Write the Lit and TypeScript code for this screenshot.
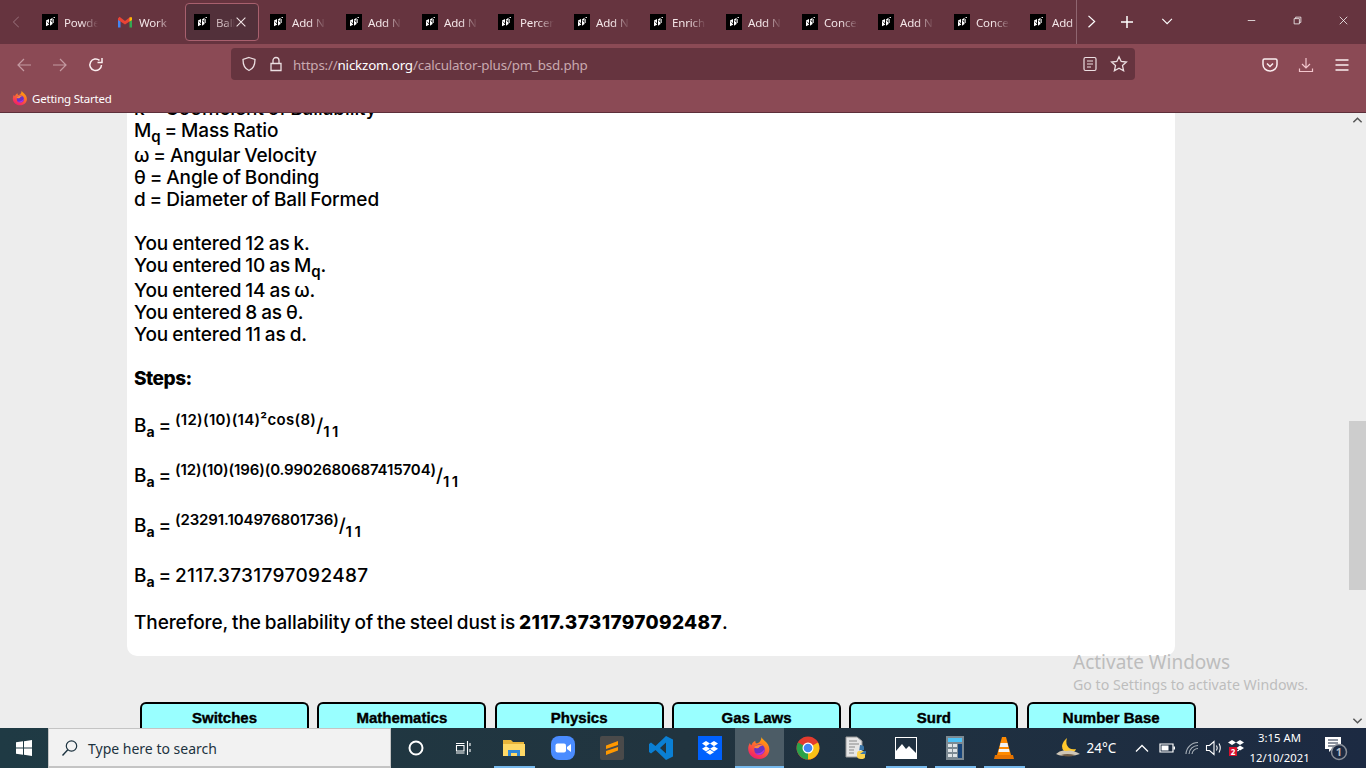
import { LitElement, html, css, svg } from "lit";
import { customElement } from "lit/decorators.js";

const favicon = html`<svg class="fav" viewBox="0 0 16 16"><rect width="16" height="16" fill="#000"/><path d="M4 6.500 7 5V10.800L4 12.200ZM8 5.500 10.500 3.800V10L8 11.800Z" fill="#fff"/><path d="M5 7.500 7 10M8.800 6 10 8" stroke="#000" stroke-width="0.800"/><rect x="11.500" y="3" width="1.500" height="1" fill="#ddd"/><rect x="11" y="5" width="1" height="4" fill="#aaa"/></svg>`;
const gmail = html`<svg class="fav" viewBox="0 0 16 16"><path d="M1 4.500V13.500H3.500V7.500Z" fill="#4285f4"/><path d="M15 4.500V13.500H12.500V7.500Z" fill="#34a853"/><path d="M1 4.500 2.500 2.800 8 7 13.500 2.800 15 4.500 15 6 12.500 7.500 8 10.500 3.500 7.500 1 6Z" fill="#ea4335"/><path d="M12.500 3.500 15 3.200V6L12.500 7.500Z" fill="#fbbc04"/></svg>`;
const fox = (s: number) => html`<svg width=${s} height=${s} viewBox="0 0 24 24">
  <defs><linearGradient id="fxb" x1="0.800" y1="0" x2="0.300" y2="1"><stop offset="0" stop-color="#ffb000"/><stop offset="0.450" stop-color="#ff6b2e"/><stop offset="1" stop-color="#f0186f"/></linearGradient></defs>
  <path d="M14.500 1C15.500 3.800 19 5 21 8.500 23.500 13 22.500 18 18.500 21 14 24.300 7.500 23.500 3.800 19.500 .5 16 .5 11 2.800 7 3.200 8.300 3.800 9 4.500 9.300 5 7.300 6.500 5.500 8.500 4.800 8 6.300 8.500 7 9.500 7.500 11.500 7 14 6 14.500 1Z" fill="url(#fxb)"/>
  <circle cx="12.500" cy="13.500" r="5.300" fill="#6a32c4"/>
  <path d="M7 11.500C9 9 13 8 16 9.500 14 9.500 12.500 10.500 11.500 12 9.800 12.500 8.200 12.300 7 11.500Z" fill="#ff8a3d"/>
  <path d="M17.500 13C17.800 16 15.500 18.500 12.500 18.800 10.500 19 9 18.300 8 17.300 11 18 15 17 17.500 13Z" fill="#b833e1"/>
</svg>`;

const tabs = ["Powder", "Work", "Ball", "Add N", "Add N", "Add N", "Percent", "Add N", "Enrich", "Add N", "Concen", "Add N", "Concen", "Add N"];

const line = (d: string, w = 1.3) => svg`<path d=${d} fill="none" stroke="currentColor" stroke-width=${w}/>`;
const ico = (s: number, d: string, w = 1.3, vb = 16) => html`<svg class="ic" width=${s} height=${s} viewBox="0 0 ${vb} ${vb}">${line(d, w)}</svg>`;

@customElement("app-root")
export class AppRoot extends LitElement {
  static styles = css`
    :host { display: flex; flex-direction: column; width: 1366px; height: 768px; overflow: hidden; position: relative; font-family: "Noto Sans", sans-serif; }
    .ic { display: block; flex: none; }
    .tabbar { height: 44px; background: #66343f; display: flex; align-items: center; color: #fff; flex: none; }
    .arrow-l { width: 33px; display: flex; justify-content: center; color: #8f6670; }
    .strip { width: 1043px; height: 44px; display: flex; overflow: hidden; flex: none; align-items: center; }
    .tab { width: 74px; margin-right: 2px; height: 38px; box-sizing: border-box; flex: none; display: flex; align-items: center; padding-left: 8px; gap: 6px; font-size: 11.500px; letter-spacing: -0.150px; color: #f4e6e8; position: relative; border: 1px solid transparent; border-radius: 4px; }
    .tab.active { background: #52303a; border-color: #a8606e; }
    .tab:nth-child(2) .fav { margin-left: -1px; }
    .fav { width: 16px; height: 16px; flex: none; }
    .title { overflow: hidden; white-space: nowrap; width: 34px; -webkit-mask-image: linear-gradient(90deg, #000 50%, transparent 100%); mask-image: linear-gradient(90deg, #000 50%, transparent 100%); }
    .active .title { width: 19px; color: #cdb8bc; }
    .close { position: absolute; right: 10px; top: 11px; }
    .sep { width: 1px; height: 44px; background: #8f6670; flex: none; }
    .tabctl { width: 29px; display: flex; justify-content: center; flex: none; }
    .tabctl.plus { margin-left: -4px; width: 50px; }
    .tabctl.chev { width: 32px; }
    .winctl { margin-left: auto; margin-right: -2px; display: flex; }
    .winctl div { width: 46px; display: flex; justify-content: center; }
    .toolbar { height: 40px; background: #8b4a55; display: flex; align-items: center; color: #fbeef0; flex: none; }
    .nav { width: 36px; display: flex; justify-content: center; flex: none; }
    .nav.dim { color: #c49aa2; }
    .navs { display: flex; padding: 2px 0 0 6px; width: 231px; box-sizing: border-box; flex: none; }
    .url { width: 904px; height: 32px; border-radius: 4px; background: #66343f; display: flex; align-items: center; flex: none; padding-left: 10px; box-sizing: border-box; color: #ecdfe2; }
    .url .shield { margin-right: 11px; }
    .url .lock { margin-right: 9px; }
    .addr { font-size: 13.400px; letter-spacing: -0.200px; color: #c9a9af; white-space: nowrap; flex: 1; padding-top: 2px; }
    .addr b { font-weight: 400; color: #fff; }
    .url .reader { margin-right: 12px; }
    .url .star { margin-right: 7px; }
    .right { display: flex; margin-left: 117px; align-items: center; padding-top: 1px; }
    .right div { width: 36px; display: flex; justify-content: center; }
    .right .pink { color: #f3c6cd; }
    .bookmarks { height: 28px; background: #8b4a55; border-bottom: 1px solid #5d2f3a; display: flex; align-items: center; padding-left: 12px; gap: 4px; font-size: 11.500px; letter-spacing: -0.200px; color: #fff; flex: none; }
    .main { flex: 1; min-height: 0; background: #ededed; position: relative; display: flex; overflow: hidden; }
    .page { flex: 1; min-width: 0; overflow: hidden; }
    .scroll { width: 17px; flex: none; display: flex; flex-direction: column; color: #555; }
    .scroll .up { height: 15px; display: flex; justify-content: center; align-items: center; }
    .track { flex: 1; padding-top: 293px; }
    .thumb { height: 169px; background: #cdcdcd; }
    .card { margin: -15px 0 0 127px; width: 1048px; box-sizing: border-box; background: #fff; border-radius: 0 0 10px 10px; padding: 0 7px 24px; font-family: Inter, sans-serif; font-weight: 500; font-size: 19px; line-height: 22px; color: #000; word-spacing: -1px; letter-spacing: -0.100px; height: 558px; }
    .card sub, .card sup { font-size: 15px; font-weight: 600; line-height: 16px; }
    .card sub.a { font-size: 14px; font-weight: 700; }
    .card sub.den { letter-spacing: 2.500px; }
    .card sup.wide { letter-spacing: 0.300px; }
    .card strong { font-weight: 800; }
    .card strong.steps { letter-spacing: -0.500px; }
    .num { letter-spacing: 0.350px; }
    .btns { display: flex; gap: 8.350px; margin: 46px 0 0 140px; }
    .btn { width: 169px; height: 40px; flex: none; box-sizing: border-box; background: #99ffff; border: 2px solid #000; border-bottom: none; border-radius: 6px 6px 0 0; text-align: center; font-family: "Liberation Sans", sans-serif; font-weight: 700; font-size: 15px; padding-top: 5px; color: #000; -webkit-text-stroke: 0.400px #000; }
    .activate { position: absolute; left: 1073px; top: 536px; color: #bdbdbd; pointer-events: none; font-size: 19px; line-height: 26px; }
    .activate small { display: block; font-size: 14.200px; line-height: 20px; }
    .taskbar { height: 40px; flex: none; background: linear-gradient(90deg, #1f3a44 0%, #21343f 50%, #1c2a42 100%); display: flex; align-items: center; color: #fff; }
    .start { width: 48px; display: flex; justify-content: center; flex: none; }
    .search { width: 343px; height: 40px; box-sizing: border-box; background: #f2f2f2; border: 1px solid #c4c4c4; border-bottom-width: 2px; display: flex; align-items: center; padding-left: 12px; gap: 9px; color: #1d3340; font-size: 14px; flex: none; }
    .search span { padding-top: 1px; }
    .cell { width: 49px; height: 40px; display: flex; align-items: center; justify-content: center; flex: none; position: relative; box-sizing: border-box; }
    .cell.tv { width: 49.500px; padding-right: 4px; }
    .cell.on::after { content: ""; position: absolute; left: 4px; right: 4px; bottom: 0; height: 2px; background: #76b9ed; }
    .cell.cur { background: #4c5c66; }
    .cell.cur::after { left: 0; right: 0; }
    .tray { display: flex; align-items: center; height: 40px; margin-left: 27px; }
    .temp { font-size: 13.500px; margin: 0 15px 0 7px; width: 32px; }
    .clock { font-size: 11.300px; line-height: 20px; text-align: center; width: 60px; margin-left: 5px; }
    .notif { margin-left: 14px; display: flex; }
    .t { margin-right: 9px; }
    .t.bat { margin-right: 9px; }
    .t.wifi { margin-right: 5px; color: #aab2ba; }
    .t.vol { margin-right: 5px; }
  `;

  private winIcon() {
    return html`<svg width="16" height="16" viewBox="0 0 16 16"><path d="M0 2.300 7 1.300V7.500H0ZM8 1.200 16 0V7.500H8ZM0 8.500H7V14.700L0 13.700ZM8 8.500H16V16L8 14.800Z" fill="#fff"/></svg>`;
  }

  render() {
    return html`
      <div class="tabbar">
        <div class="arrow-l">${ico(14, "M10 2 4 8 10 14", 1.200)}</div>
        <div class="strip">
          ${tabs.map((t, i) => html`<div class="tab ${i === 2 ? "active" : ""}">
            ${i === 1 ? gmail : favicon}<span class="title">${t}</span>
            ${i === 2 ? html`<span class="close">${ico(14, "M3 3 13 13M13 3 3 13", 1.200)}</span>` : ""}
          </div>`)}
        </div>
        <div class="sep"></div>
        <div class="tabctl">${ico(14, "M4 1 11 7.500 4 14", 1.400)}</div>
        <div class="tabctl plus">${ico(16, "M8 2V14M2 8H14", 1.500)}</div>
        <div class="tabctl chev">${ico(14, "M1.500 4.500 7 10 12.500 4.500", 1.300)}</div>
        <div class="winctl">
          <div>${ico(12, "M1 6H11", 1)}</div>
          <div>${ico(12, "M1.500 3.500H8.500V10.500H1.500ZM3.500 3.500V1.500H10.500V8.500H8.500", 1)}</div>
          <div>${ico(12, "M1 1 11 11M11 1 1 11", 1)}</div>
        </div>
      </div>

      <div class="toolbar">
        <div class="navs">
          <div class="nav dim">${ico(16, "M15 8H2M8 2 2 8 8 14", 1.200)}</div>
          <div class="nav dim">${ico(16, "M1 8H14M8 2 14 8 8 14", 1.200)}</div>
          <div class="nav">${ico(16, "M13.500 8A5.800 5.800 0 1 1 11.500 3.400M9.500 5.500H14V1", 1.500)}</div>
        </div>
        <div class="url">
          <span class="shield">${ico(16, "M8 1.500 14 3.500C14 9 12 13 8 14.500 4 13 2 9 2 3.500Z", 1.300)}</span>
          <span class="lock">${ico(16, "M3 7.500H13V14.500H3ZM5 7.500V4.500A3 3 0 0 1 11 4.500V7.500", 1.300)}</span>
          <div class="addr">https://<b>nickzom.org</b>/calculator-plus/pm_bsd.php</div>
          <span class="reader">${ico(16, "M3.500 1.500H12.500Q14 1.500 14 3V13Q14 14.500 12.500 14.500H3.500Q2 14.500 2 13V3Q2 1.500 3.500 1.500ZM5 5H11M5 8H11M5 11H9", 1.200)}</span>
          <span class="star">${ico(18, "M9 1.800 11.200 6.500 16.400 7.100 12.500 10.600 13.600 15.800 9 13.200 4.400 15.800 5.500 10.600 1.600 7.100 6.800 6.500Z", 1.300, 18)}</span>
        </div>
        <div class="right">
          <div>${ico(16, "M2.500 2H13.500Q15 2 15 3.500V7.500A7 6.500 0 0 1 1 7.500V3.500Q1 2 2.500 2ZM5 6.500 8 9.500 11 6.500", 1.500)}</div>
          <div class="pink">${ico(16, "M8 1V10.500M4 7 8 11 12 7M1.500 11.500V14.500H14.500V11.500", 1.200)}</div>
          <div>${ico(16, "M1.500 3H14.500M1.500 8H14.500M1.500 13H14.500", 1.400)}</div>
        </div>
      </div>

      <div class="bookmarks">${fox(16)}<span>Getting Started</span></div>

      <div class="main">
        <div class="page">
          <div class="card">
            k = Coefficient of Ballability<br>
            M<sub>q</sub> = Mass Ratio<br>
            ω = Angular Velocity<br>
            θ = Angle of Bonding<br>
            d = Diameter of Ball Formed<br><br>
            You entered 12 as k.<br>
            You entered 10 as M<sub>q</sub>.<br>
            You entered 14 as ω.<br>
            You entered 8 as θ.<br>
            You entered 11 as d.<br><br>
            <strong class="steps">Steps:</strong><br><br>
            B<sub class="a">a</sub> = <sup class="wide">(12)(10)(14)²cos(8)</sup>/<sub class="den">11</sub><br><br>
            B<sub class="a">a</sub> = <sup>(12)(10)(196)(0.9902680687415704)</sup>/<sub class="den">11</sub><br><br>
            B<sub class="a">a</sub> = <sup>(23291.104976801736)</sup>/<sub class="den">11</sub><br><br>
            B<sub class="a">a</sub> = <span class="num">2117.3731797092487</span><sup></sup><br><br>
            Therefore, the ballability of the steel dust is <strong class="num">2117.3731797092487</strong>.
          </div>
          <div class="btns">
            ${["Switches", "Mathematics", "Physics", "Gas Laws", "Surd", "Number Base"].map((b) => html`<div class="btn">${b}</div>`)}
          </div>
        </div>
        <div class="scroll">
          <div class="up">${ico(11, "M1.500 8 6 3.500 10.500 8", 1.600, 12)}</div>
          <div class="track"><div class="thumb"></div></div>
          <div class="up">${ico(11, "M1.500 4 6 8.500 10.500 4", 1.600, 12)}</div>
        </div>
        <div class="activate">Activate Windows<small>Go to Settings to activate Windows.</small></div>
      </div>

      <div class="taskbar">
        <div class="start">${this.winIcon()}</div>
        <div class="search">
          <svg width="18" height="18" viewBox="0 0 18 18"><circle cx="10.500" cy="7" r="5.200" fill="none" stroke="#1d3340" stroke-width="1.200"/><path d="M6.800 10.800 1.500 16.500" stroke="#1d3340" stroke-width="1.400"/></svg>
          <span>Type here to search</span>
        </div>
        <div class="cell"><svg width="16" height="16" viewBox="0 0 16 16"><circle cx="8" cy="8" r="6.500" fill="none" stroke="#fff" stroke-width="2"/></svg></div>
        <div class="cell tv"><svg width="16" height="16" viewBox="0 0 16 16"><path d="M1 3.500H9.500M1 13H9.500M1.500 5.500H9V11H1.500ZM12.500 1V15M15 3V6M15 9V12" fill="none" stroke="#fff" stroke-width="1.100"/></svg></div>
        <div class="cell on">
          <svg width="22" height="20" viewBox="0 0 22 20"><path d="M0 2H8L10 4H21V18H0Z" fill="#e9b53a"/><path d="M0 6H22V18H0Z" fill="#ffd966"/><path d="M5 12H17V18H14V15H8V18H5Z" fill="#2f88d8"/></svg>
        </div>
        <div class="cell">
          <svg width="24" height="24" viewBox="0 0 24 24"><rect width="24" height="24" rx="8" fill="#4a8cff"/><rect x="4.500" y="7.500" width="10.500" height="9" rx="2" fill="#fff"/><path d="M16 11 20 8V16L16 13Z" fill="#fff"/></svg>
        </div>
        <div class="cell">
          <svg width="24" height="24" viewBox="0 0 24 24"><rect width="24" height="24" rx="2" fill="#4a4a4a"/><path d="M18 5V9L6 13V9.500ZM6 19V15L18 11V14.500Z" fill="#ff9800"/></svg>
        </div>
        <div class="cell">
          <svg width="24" height="24" viewBox="0 0 24 24"><path d="M17 0 24 3.500V20.500L17 24 6.500 14 2 17.500 0 16V8L2 6.500 6.500 10ZM17 6.500 11 12 17 17.500Z" fill="#0a7fd4"/></svg>
        </div>
        <div class="cell">
          <svg width="24" height="24" viewBox="0 0 24 24"><rect width="24" height="24" fill="#0061fe"/><path d="M8 5 12 7.600 8 10.200 4 7.600ZM16 5 20 7.600 16 10.200 12 7.600ZM8 10.200 12 12.800 8 15.400 4 12.800ZM16 10.200 20 12.800 16 15.400 12 12.800ZM8 16.200 12 13.800 16 16.200 12 18.800Z" fill="#fff"/></svg>
        </div>
        <div class="cell on cur">${fox(24)}</div>
        <div class="cell">
          <svg width="24" height="24" viewBox="0 0 24 24"><circle cx="12" cy="12" r="11.500" fill="#e33b2e"/><path d="M12 12 22 6.500A11.500 11.500 0 0 1 12 23.500Z" fill="#fbc116"/><path d="M12 12 12 23.500A11.500 11.500 0 0 1 2 6.500Z" fill="#2aa24a"/><circle cx="12" cy="12" r="5.500" fill="#fff"/><circle cx="12" cy="12" r="4.300" fill="#4285f4"/></svg>
        </div>
        <div class="cell">
          <svg width="24" height="24" viewBox="0 0 24 24"><path d="M1 1H12L17 5V21H1Z" fill="#e6e6e6" stroke="#999"/><path d="M4 5H12M4 8H14M4 11H10M4 14H9M4 17H9" stroke="#888"/><path d="M15 9Q19 9 19 11V14H14V15H21Q21 20 19 20H14V16Z" fill="#3b76a8"/><path d="M19 15H14Q12 15 12 18V20Q12 23 16 23 20 23 20 21V18H15Z" fill="#fcd34d"/></svg>
        </div>
        <div class="cell on">
          <svg width="22" height="22" viewBox="0 0 22 22"><rect x="0.500" y="0.500" width="21" height="21" fill="#1f3040" stroke="#fff"/><path d="M1 21V14L7 7 11 12 14 9 21 16V21Z" fill="#fff"/></svg>
        </div>
        <div class="cell on">
          <svg width="18" height="24" viewBox="0 0 18 24"><rect width="18" height="24" fill="#7c8a93"/><rect x="2" y="2" width="14" height="4" fill="#4fc3f7"/><path d="M2 8H6V11H2ZM7 8H11V11H7ZM2 13H6V16H2ZM7 13H11V16H7ZM2 18H6V21H2ZM7 18H11V21H7Z" fill="#dfe4e7"/><rect x="12" y="8" width="4" height="14" fill="#16447a"/></svg>
        </div>
        <div class="cell on">
          <svg width="20" height="22" viewBox="0 0 20 22"><path d="M8 0H12L17 18H3Z" fill="#ff8a00"/><path d="M6.500 6H13.500L14.300 10H5.700ZM5 12H15L15.500 15H4.500Z" fill="#f2f2f2"/><path d="M1 18H19L20 22H0Z" fill="#e67300"/></svg>
        </div>
        <div class="tray">
          <svg width="24" height="22" viewBox="0 0 24 22"><path d="M11 1Q9 7 13 11 16 13 20 12 19 16 13 16 6 15 6 9 7 4 11 1Z" fill="#ffc72c"/><path d="M0 17Q5 12 10 14 16 12 24 17 16 20 11 18 5 20 0 17Z" fill="#cfc6b6"/><path d="M5 18Q11 16 19 18 13 21 5 18Z" fill="#6d5a45"/></svg>
          <span class="temp">24°C</span>
          <span class="t">${ico(16, "M2 11.500 8 5.500 14 11.500", 1.300)}</span>
          <span class="t bat"><svg class="ic" width="16" height="16" viewBox="0 0 16 16"><path d="M1 4H14V12H1Z" fill="none" stroke="#fff" stroke-width="1.200"/><rect x="2.500" y="5.500" width="7" height="5" fill="#fff"/><rect x="14.500" y="6.500" width="1.500" height="3" fill="#fff"/></svg></span>
          <span class="t wifi">${ico(16, "M2 14A12 12 0 0 1 14 2.500M5 14A9 9 0 0 1 14 5.500M8 14A6 6 0 0 1 14 8.500", 1.100)}</span>
          <span class="t vol">${ico(18, "M1.500 6.500H4.500L9 2.500V15.500L4.500 11.500H1.500ZM11.500 6.500Q13 9 11.500 11.500M14 4.500Q16.500 9 14 13.500", 1.100, 18)}</span>
          <svg width="17" height="18" viewBox="0 0 17 18"><path d="M4 1 8 3.500 4 6 0 3.500ZM12 1 16 3.500 12 6 8 3.500ZM12 6.500 16 9 12 11.500 8.500 9ZM8 12.500 11 10 11 12Z" fill="#fff"/><rect x="1" y="8" width="8" height="9" fill="#d8112e"/><text x="5" y="16" font-size="8" font-weight="700" text-anchor="middle" fill="#fff">2</text></svg>
          <div class="clock">3:15 AM<br>12/10/2021</div>
          <div class="notif">
            <svg width="26" height="26" viewBox="0 0 26 26"><path d="M1 2H17V14H8L5 17V14H1Z" fill="#fff"/><path d="M4 5H14M4 8H14M4 11H11" stroke="#1c2a42"/><circle cx="15" cy="17" r="7.500" fill="#1c2a42" stroke="#8a8f98" stroke-width="1.500"/><text x="15" y="21" font-size="11" font-weight="700" text-anchor="middle" fill="#b8bcc2">1</text></svg>
          </div>
        </div>
      </div>
    `;
  }
}
